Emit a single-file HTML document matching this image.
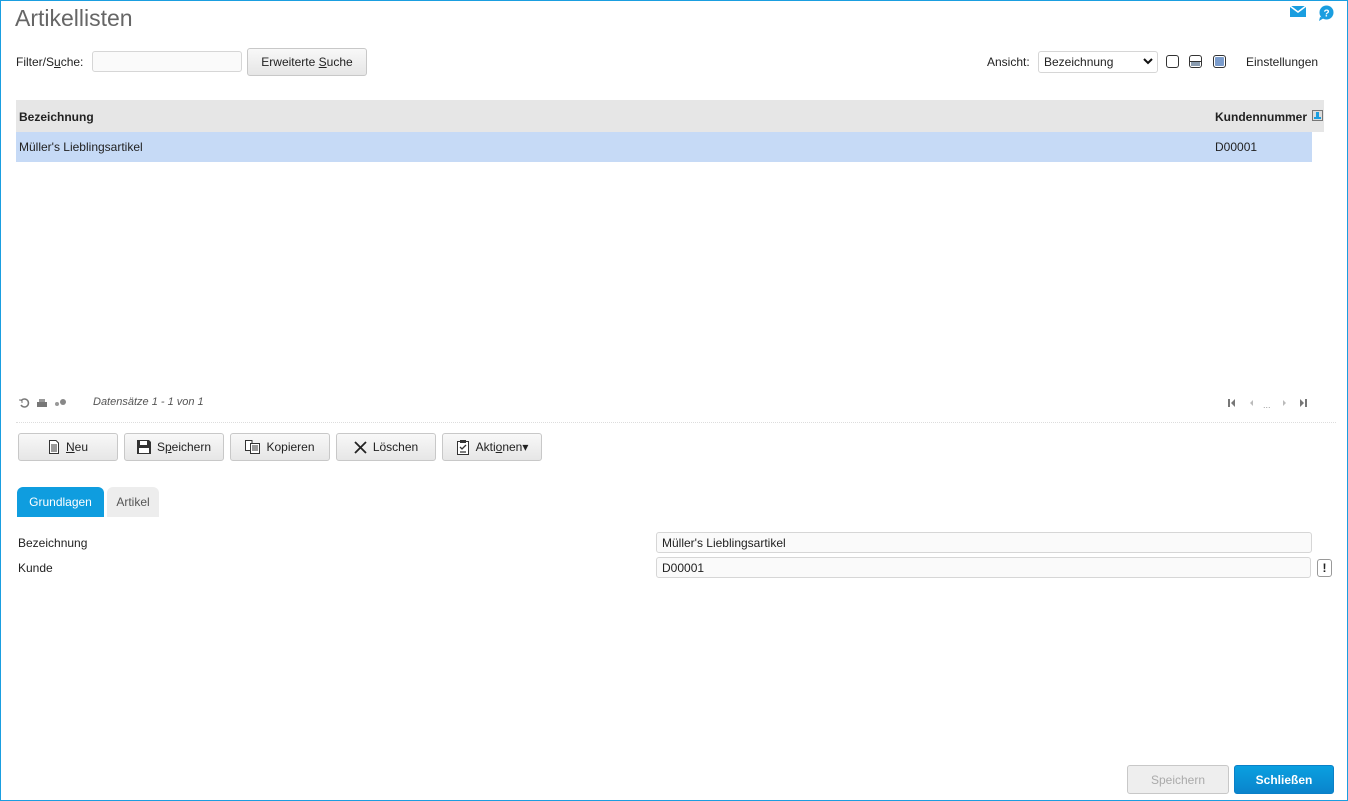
<!DOCTYPE html>
<html><head><meta charset="utf-8"><style>
*{box-sizing:border-box}
body{margin:0;width:1348px;height:801px;overflow:hidden;font-family:"Liberation Sans",Arial,sans-serif;font-size:12px;color:#222;background:#fff}
.frame{position:absolute;left:0;top:0;width:1348px;height:801px;border:1px solid #1a9ee0}
.a{position:absolute}
h1{position:absolute;left:15px;top:5px;margin:0;font-weight:normal;font-size:23px;color:#666}
.btn{position:absolute;height:28px;border:1px solid #c8c8c8;border-radius:3px;background:linear-gradient(#f8f8f8,#e6e6e6);font-size:12px;color:#222;display:flex;align-items:center;justify-content:center;gap:6px}
.inp{position:absolute;border:1px solid #d6d6d6;border-radius:3px;background:#fafafa;padding-left:5px;display:flex;align-items:center;font-size:12px}
.sq{position:absolute;width:13px;height:13px;border:1px solid #333;border-radius:3px;top:55px;overflow:hidden}
</style></head><body><div class="frame"></div>
<h1>Artikellisten</h1>
<svg class="a" style="left:1290px;top:6px" width="16" height="12"><rect width="16" height="11" fill="#1a9ee0"/><path d="M0 0 L8 6 L16 0" stroke="#fff" stroke-width="1.5" fill="none"/></svg>
<svg class="a" style="left:1318px;top:5px" width="17" height="16"><circle cx="8.5" cy="7.5" r="7" fill="#1a9ee0"/><path d="M2 12 L1 16 L6 13Z" fill="#1a9ee0"/><text x="8.5" y="11.5" font-size="10" font-weight="bold" fill="#fff" text-anchor="middle" font-family="Liberation Sans">?</text></svg>
<div class="a" style="left:16px;top:55px">Filter/S<u>u</u>che:</div>
<div class="inp" style="left:92px;top:51px;width:150px;height:21px"></div>
<div class="btn" style="left:247px;top:48px;width:120px;height:28px"><span>Erweiterte <u>S</u>uche</span></div>
<div class="a" style="left:987px;top:55px">Ansicht:</div>
<div class="inp" style="left:1038px;top:51px;width:120px;height:22px;background:#fff">Bezeichnung</div>
<svg class="a" style="left:1143px;top:58px" width="10" height="8"><path d="M1 1 L5 5 L9 1" stroke="#111" stroke-width="2" fill="none"/></svg>
<div class="sq" style="left:1166px"></div>
<div class="sq" style="left:1189px"><div style="position:absolute;left:0;right:0;top:5px;height:1px;background:#333"></div><div style="position:absolute;left:1px;right:1px;bottom:1px;height:4px;background:#8a9cb0"></div></div>
<div class="sq" style="left:1213px;background:#7b9ccc;box-shadow:inset 0 0 0 1px #fff"></div>
<div class="a" style="left:1246px;top:55px">Einstellungen</div>
<div class="a" style="left:16px;top:100px;width:1308px;height:32px;background:#e6e6e6"></div>
<div class="a" style="left:19px;top:110px;font-weight:bold">Bezeichnung</div>
<div class="a" style="left:1215px;top:110px;font-weight:bold">Kundennummer</div>
<svg class="a" style="left:1312px;top:110px" width="11" height="11"><rect x="0.5" y="0.5" width="10" height="10" fill="#ddd" stroke="#777"/><rect x="4" y="2" width="3" height="5" fill="#1a9ee0"/><rect x="2" y="7" width="7" height="2" fill="#1a9ee0"/></svg>
<div class="a" style="left:16px;top:132px;width:1296px;height:30px;background:#c6daf6"></div>
<div class="a" style="left:19px;top:140px">Müller's Lieblingsartikel</div>
<div class="a" style="left:1215px;top:140px">D00001</div>
<svg class="a" style="left:18px;top:397px" width="52" height="12"><path d="M3 4 A4 4 0 1 1 3 8" stroke="#777" stroke-width="1.5" fill="none"/><path d="M1 3 L4 3 L4 6" stroke="#777" stroke-width="1" fill="none"/><rect x="19" y="5" width="10" height="5" fill="#777"/><rect x="21" y="2" width="6" height="3" fill="#999"/><circle cx="39" cy="7" r="2" fill="#999"/><circle cx="45" cy="5" r="3" fill="#888"/></svg>
<div class="a" style="left:93px;top:396px;font-style:italic;font-size:11px;color:#555">Datensätze 1 - 1 von 1</div>
<svg class="a" style="left:1226px;top:397px" width="86" height="12"><rect x="2" y="2" width="2" height="8" fill="#777"/><path d="M9 2 L5 6 L9 10Z" fill="#777"/><path d="M27 3 L24 6 L27 9Z" fill="#bbb"/><text x="37" y="11" font-size="9" fill="#999" font-family="Liberation Sans">...</text><path d="M57 3 L60 6 L57 9Z" fill="#bbb"/><path d="M74 2 L78 6 L74 10Z" fill="#777"/><rect x="79" y="2" width="2" height="8" fill="#777"/></svg>
<div class="a" style="left:16px;top:422px;width:1320px;border-top:1px dotted #ddd"></div>
<div class="btn" style="left:18px;top:433px;width:100px"><svg width="12" height="14"><path d="M1.5 .5 H8 L10.5 3 V13.5 H1.5Z" fill="#fff" stroke="#333"/><path d="M3 5H9M3 7H9M3 9H9M3 11H9" stroke="#333"/></svg><span><u>N</u>eu</span></div>
<div class="btn" style="left:124px;top:433px;width:100px"><svg width="14" height="14"><path d="M0 0H12L14 2V14H0Z" fill="#333"/><rect x="3" y="1" width="7" height="4" fill="#fff"/><rect x="2" y="8" width="10" height="5" fill="#fff"/></svg><span>S<u>p</u>eichern</span></div>
<div class="btn" style="left:230px;top:433px;width:100px"><svg width="15" height="14"><path d="M.5 .5H7V10.5H.5Z" fill="#fff" stroke="#333"/><path d="M5.5 3.5H14.5V13.5H5.5Z" fill="#fff" stroke="#333"/><path d="M7 6H13M7 8H13M7 10H13" stroke="#333"/></svg><span>Kopieren</span></div>
<div class="btn" style="left:336px;top:433px;width:100px"><svg width="13" height="13"><path d="M1 1L12 12M12 1L1 12" stroke="#222" stroke-width="1.8"/></svg><span>Löschen</span></div>
<div class="btn" style="left:442px;top:433px;width:100px"><svg width="14" height="16"><path d="M1.5 2.5H12.5V15.5H1.5Z" fill="#fff" stroke="#333"/><rect x="4" y="1" width="6" height="3" fill="#333"/><path d="M4 8L6 10L10 6M4 13H10" stroke="#333" stroke-width="1.3" fill="none"/></svg><span>Akti<u>o</u>nen▾</span></div>
<div class="a" style="left:17px;top:487px;width:87px;height:30px;background:#0f9ddf;border-radius:6px 6px 0 0;color:#fff;display:flex;align-items:center;justify-content:center">Grundlagen</div>
<div class="a" style="left:107px;top:487px;width:52px;height:30px;background:#ededed;border-radius:6px 6px 0 0;color:#555;display:flex;align-items:center;justify-content:center">Artikel</div>
<div class="a" style="left:18px;top:536px">Bezeichnung</div>
<div class="a" style="left:18px;top:561px">Kunde</div>
<div class="inp" style="left:656px;top:532px;width:656px;height:21px">Müller's Lieblingsartikel</div>
<div class="inp" style="left:656px;top:557px;width:655px;height:21px">D00001</div>
<div class="a" style="left:1317px;top:559px;width:15px;height:18px;border:1px solid #999;border-radius:3px;text-align:center;font-weight:bold;line-height:16px">!</div>
<div class="btn" style="left:1127px;top:765px;width:102px;height:29px;color:#aaa;background:#eee">Speichern</div>
<div class="btn" style="left:1234px;top:765px;width:100px;height:29px;color:#fff;background:linear-gradient(#0aa0e0,#0a84cc);border-color:#0a80c8;font-weight:bold">Schließen</div>
</body></html>
